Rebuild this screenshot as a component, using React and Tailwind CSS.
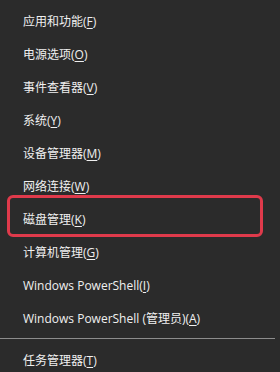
import React from "react";

const items = [
  ["应用和功能(", "F", ")"],
  ["电源选项(", "O", ")"],
  ["事件查看器(", "V", ")"],
  ["系统(", "Y", ")"],
  ["设备管理器(", "M", ")"],
  ["网络连接(", "W", ")"],
  ["磁盘管理(", "K", ")"],
  ["计算机管理(", "G", ")"],
  ["Windows PowerShell(", "I", ")"],
  ["Windows PowerShell (管理员)(", "A", ")"],
];

function Row({ label }) {
  return (
    <div className="h-[33px] flex items-center pl-[23px] text-[12px] text-[#f0f0f0] whitespace-nowrap">
      {label[0]}
      <span className="underline underline-offset-2">{label[1]}</span>
      {label[2]}
    </div>
  );
}

export default function App() {
  return (
    <div
      className="relative w-[280px] h-[372px] overflow-hidden bg-[#2b2b2b] pt-[5px]"
      style={{ fontFamily: '"Open Sans", "Noto Sans CJK SC", sans-serif' }}
    >
      {items.map((it) => (
        <Row key={it[1]} label={it} />
      ))}
      <div className="mt-[3px] mb-[5px] h-px w-[275px] bg-[#8c8c8c]" />
      <Row label={["任务管理器(", "T", ")"]} />

      {/* red highlight box */}
      <div className="absolute left-[7px] top-[195px] w-[256px] h-[42px] border-[3px] border-[#df3a4b] rounded-[6px]" />
    </div>
  );
}
